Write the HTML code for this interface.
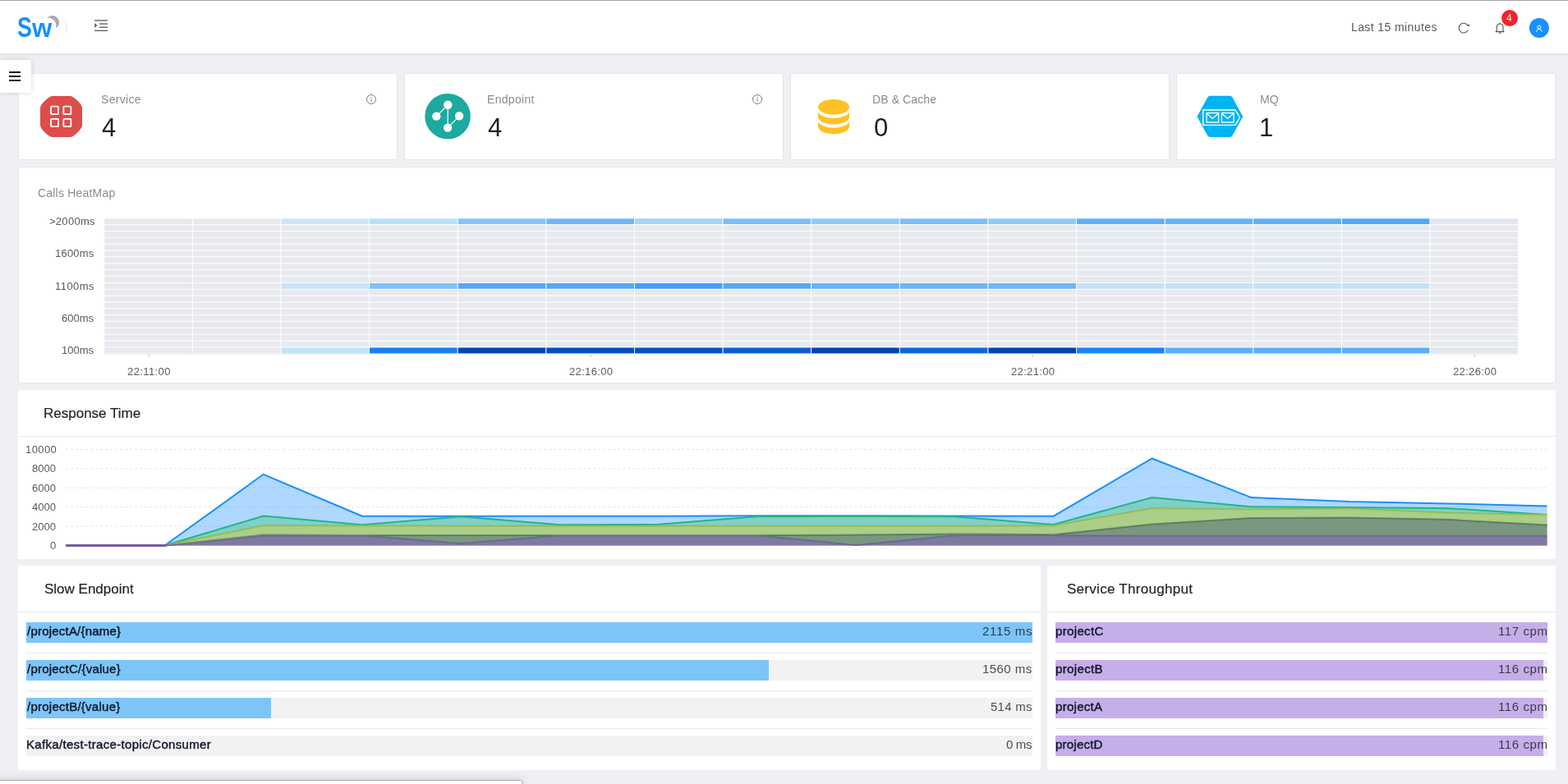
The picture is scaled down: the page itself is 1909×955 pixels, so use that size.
<!DOCTYPE html>
<html lang="en">
<head>
<meta charset="utf-8">
<title>SkyWalking</title>
<style>
html,body{margin:0;padding:0;}
body{width:1909px;height:955px;overflow:hidden;background:#eef0f4;font-family:"Liberation Sans", sans-serif;position:relative;}
.b{position:absolute;display:block;}
.t{position:absolute;white-space:nowrap;font-family:"Liberation Sans", sans-serif;will-change:transform;}
svg text{font-family:"Liberation Sans", sans-serif;}
</style>
</head>
<body>
<header class="topbar">
<div class="b " style="left:0px;top:0px;width:1909px;height:64.5px;background:#fff;box-shadow:0 1px 4px rgba(0,21,41,.10);"></div>
<div class="b " style="left:0px;top:0px;width:1909px;height:1px;background:#a3a1a4;"></div>
<svg class="b" style="left:0;top:0" width="160" height="65" viewBox="0 0 160 65">
<path d="M57.3,21.8 Q60,18.9 64,19 C69,19.4 72.3,23.5 72,28 C71.8,31 70.2,33.4 67.8,34.1 C69.4,30.2 67.6,26 64.6,23.7 C62.5,22.1 60,21.6 57.3,21.8 Z" fill="#a9a9a9"/>
<rect x="80" y="27" width="1" height="13" fill="#e3e3e3"/>
<g fill="#595959">
<rect x="115" y="24.3" width="16" height="1.3"/>
<rect x="121" y="28.4" width="10" height="1.3"/>
<rect x="121" y="32.6" width="10" height="1.3"/>
<rect x="115" y="36.7" width="16" height="1.3"/>
<path d="M115.2,28.2 L118.6,31 L115.2,33.8 Z"/>
</g>
</svg>
<div class="t" style="left:0;top:16.56px;font-size:33.6px;line-height:33.6px;font-weight:bold;color:#1890ff;width:90px;height:34px"><span style="position:absolute;left:21.2px;top:0;display:block;transform-origin:0 28.44px;transform:scale(0.8,1.055)">S</span><span style="position:absolute;left:39.4px;top:0;display:block;transform-origin:0 28.44px;transform:scale(0.93,0.945)">w</span></div>
<svg class="b" style="left:1760px;top:0" width="149" height="65" viewBox="1760 0 149 65">
<path d="M1786.96,30.91 A5.85,5.85 0 1 0 1787.39,36.48" fill="none" stroke="#505050" stroke-width="1.1"/>
<path d="M1788.9,29.3 L1788.6,32.2 L1785.9,31.2 Z" fill="#505050"/>
<g fill="none" stroke="#505050" stroke-width="1.1" stroke-linejoin="round">
<path d="M1822.2,38.4 L1822.2,33.2 A3.9,4.2 0 0 1 1830,33.2 L1830,38.4 M1820.6,38.6 L1831.4,38.6"/>
<path d="M1824.9,39.7 Q1826.1,41.4 1827.3,39.7"/>
<path d="M1826.1,29 L1826.1,27.8"/>
</g>
<circle cx="1838" cy="22" r="10" fill="#f5222d"/>
<circle cx="1873.9" cy="33.9" r="12" fill="#1890ff"/>
<g fill="none" stroke="#fff" stroke-width="0.95">
<circle cx="1873.9" cy="33.0" r="2.0"/>
<path d="M1870.4,38.8 Q1870.9,35.3 1873.9,35.2 Q1876.9,35.3 1877.4,38.8"/>
</g>
</svg>
<div class="t" style="left:1645px;top:26px;font-size:14px;line-height:14px;color:#595959;letter-spacing:0.400px;">Last 15 minutes</div>
<div class="t" style="left:1834px;top:16px;font-size:12px;line-height:12px;color:#fff;">4</div>
</header>
<main>
<section class="stat-cards">
<div class="b" style="left:22px;top:89px;width:462px;height:106px;background:#fff;border:1px solid #e5e5e6;border-radius:2px;box-sizing:border-box"></div>
<div class="b" style="left:492px;top:89px;width:462px;height:106px;background:#fff;border:1px solid #e5e5e6;border-radius:2px;box-sizing:border-box"></div>
<div class="b" style="left:962px;top:89px;width:462px;height:106px;background:#fff;border:1px solid #e5e5e6;border-radius:2px;box-sizing:border-box"></div>
<div class="b" style="left:1432px;top:89px;width:462px;height:106px;background:#fff;border:1px solid #e5e5e6;border-radius:2px;box-sizing:border-box"></div>
<svg class="b" style="left:40px;top:110px" width="70" height="65" viewBox="40 110 70 65">
<path d="M64,116.9 L85.5,116.9 C89.5,116.9 100,126.8 100,131.4 L100,152.4 C100,157 89.5,166.9 85.5,166.9 L64,166.9 C59.5,166.9 49,157 49,152.4 L49,131.4 C49,126.8 59.5,116.9 64,116.9 Z" fill="#dd4d4a"/>
<g fill="none" stroke="#fff" stroke-width="1.8">
<rect x="62.05" y="129.65" width="9.0" height="9.4" rx="1"/>
<rect x="77.35" y="129.65" width="9.0" height="9.4" rx="1"/>
<rect x="62.05" y="144.85" width="9.0" height="9.3" rx="1"/>
<rect x="77.35" y="144.85" width="9.0" height="9.3" rx="1"/>
</g>
</svg>
<svg class="b" style="left:510px;top:110px" width="70" height="65" viewBox="510 110 70 65">
<circle cx="545.1" cy="141.7" r="27.8" fill="#1da9a0"/>
<g stroke="#fff" stroke-width="1.2" fill="none">
<path d="M545.3,127.7 L531.3,141.6 M545.3,127.7 L545.1,155.6 M559.1,141.3 L545.1,155.6"/>
</g>
<g fill="#fff">
<circle cx="545.3" cy="127.7" r="5.2"/>
<circle cx="531.3" cy="141.6" r="5.2"/>
<circle cx="559.1" cy="141.3" r="5.2"/>
<circle cx="545.1" cy="155.6" r="5.2"/>
</g>
</svg>
<svg class="b" style="left:990px;top:110px" width="50" height="65" viewBox="990 110 50 65">
<path d="M996,146 L996,154 A19,9.3 0 0 0 1034,154 L1034,146 Z" fill="#ffc122"/>
<ellipse cx="1015" cy="145.5" rx="19.8" ry="10.2" fill="#fff"/>
<rect x="995" y="138" width="40" height="7.6" fill="#fff"/>
<path d="M996,134 L996,142.2 A19,9.2 0 0 0 1034,142.2 L1034,134 Z" fill="#ffc122"/>
<ellipse cx="1015" cy="133.8" rx="19.8" ry="10.2" fill="#fff"/>
<rect x="995" y="126" width="40" height="7.9" fill="#fff"/>
<ellipse cx="1015" cy="130.3" rx="19" ry="9.4" fill="#ffc122"/>
</svg>
<svg class="b" style="left:1450px;top:110px" width="70" height="65" viewBox="1450 110 70 65">
<path d="M1457.4,141.9 L1470.2,118.6 Q1471.3,116.8 1473.4,116.8 L1497.2,116.8 Q1499.3,116.8 1500.4,118.6 L1513.2,141.9 L1500.4,165.2 Q1499.3,166.9 1497.2,166.9 L1473.4,166.9 Q1471.3,166.9 1470.2,165.2 Z" fill="#00b4f0"/>
<g fill="none" stroke="#fff" stroke-width="1.35">
<path d="M1464.7,134 L1504,134 L1509.4,143.2 L1504,152.4 L1464.7,152.4 Z"/>
<rect x="1469" y="137.6" width="14.6" height="11.4"/>
<path d="M1469.6,138.4 L1476.3,144.4 L1483,138.4"/>
<rect x="1487.4" y="137.6" width="14.6" height="11.4"/>
<path d="M1488,138.4 L1494.7,144.4 L1501.4,138.4"/>
</g>
</svg>
<svg class="b" style="left:442.06px;top:111px" width="20" height="20" viewBox="442.06 111 20 20">
<circle cx="452.06" cy="121" r="5.5" fill="none" stroke="#7a7a7a" stroke-width="1"/>
<rect x="451.51" y="119.9" width="1.1" height="3.9" fill="#8a8a8a"/>
<rect x="451.46" y="118.1" width="1.2" height="1.1" fill="#8a8a8a"/>
</svg>
<svg class="b" style="left:912.06px;top:111px" width="20" height="20" viewBox="912.06 111 20 20">
<circle cx="922.06" cy="121" r="5.5" fill="none" stroke="#7a7a7a" stroke-width="1"/>
<rect x="921.51" y="119.9" width="1.1" height="3.9" fill="#8a8a8a"/>
<rect x="921.4599999999999" y="118.1" width="1.2" height="1.1" fill="#8a8a8a"/>
</svg>
<div class="t" style="left:123px;top:114px;font-size:14px;line-height:14px;color:#8c8c8c;letter-spacing:0.317px;">Service</div>
<div class="t" style="left:124px;top:140px;font-size:31px;line-height:31px;color:#1f1f1f;">4</div>
<div class="t" style="left:593px;top:114px;font-size:14px;line-height:14px;color:#8c8c8c;letter-spacing:0.314px;">Endpoint</div>
<div class="t" style="left:594px;top:140px;font-size:31px;line-height:31px;color:#1f1f1f;">4</div>
<div class="t" style="left:1062px;top:114px;font-size:14px;line-height:14px;color:#8c8c8c;letter-spacing:0.111px;">DB &amp; Cache</div>
<div class="t" style="left:1064px;top:140px;font-size:31px;line-height:31px;color:#1f1f1f;">0</div>
<div class="t" style="left:1534px;top:114px;font-size:14px;line-height:14px;color:#8c8c8c;">MQ</div>
<div class="t" style="left:1533px;top:140px;font-size:31px;line-height:31px;color:#1f1f1f;">1</div>
</section>
<section class="heatmap">
<div class="b" style="left:22px;top:203px;width:1872px;height:264px;background:#fff;border:1px solid #e5e5e6;border-radius:2px;box-sizing:border-box"></div>
<svg class="b" style="left:0;top:255px" width="1909" height="215" viewBox="0 255 1909 215">
<g stroke="#fff" stroke-width="0.85">
<rect x="126.80" y="265.90" width="107.61" height="7.86" fill="#e8e9ee"/>
<rect x="234.41" y="265.90" width="107.61" height="7.86" fill="#e8e9ee"/>
<rect x="342.02" y="265.90" width="107.61" height="7.86" fill="#cce5f6"/>
<rect x="449.64" y="265.90" width="107.61" height="7.86" fill="#b5e0fb"/>
<rect x="557.25" y="265.90" width="107.61" height="7.86" fill="#82c5fc"/>
<rect x="664.86" y="265.90" width="107.61" height="7.86" fill="#6db8fb"/>
<rect x="772.47" y="265.90" width="107.61" height="7.86" fill="#a0d6fb"/>
<rect x="880.09" y="265.90" width="107.61" height="7.86" fill="#78bffb"/>
<rect x="987.70" y="265.90" width="107.61" height="7.86" fill="#8ccafb"/>
<rect x="1095.31" y="265.90" width="107.61" height="7.86" fill="#78bffb"/>
<rect x="1202.92" y="265.90" width="107.61" height="7.86" fill="#8ccafb"/>
<rect x="1310.54" y="265.90" width="107.61" height="7.86" fill="#5cb0fb"/>
<rect x="1418.15" y="265.90" width="107.61" height="7.86" fill="#62b4fb"/>
<rect x="1525.76" y="265.90" width="107.61" height="7.86" fill="#5bb0fb"/>
<rect x="1633.38" y="265.90" width="107.61" height="7.86" fill="#4da8fb"/>
<rect x="1740.99" y="265.90" width="107.61" height="7.86" fill="#e2e7ef"/>
<rect x="126.80" y="273.76" width="107.61" height="7.86" fill="#e8e9ee"/>
<rect x="234.41" y="273.76" width="107.61" height="7.86" fill="#e8e9ee"/>
<rect x="342.02" y="273.76" width="107.61" height="7.86" fill="#e8e9ee"/>
<rect x="449.64" y="273.76" width="107.61" height="7.86" fill="#e8e9ee"/>
<rect x="557.25" y="273.76" width="107.61" height="7.86" fill="#e8e9ee"/>
<rect x="664.86" y="273.76" width="107.61" height="7.86" fill="#e8e9ee"/>
<rect x="772.47" y="273.76" width="107.61" height="7.86" fill="#e8e9ee"/>
<rect x="880.09" y="273.76" width="107.61" height="7.86" fill="#e8e9ee"/>
<rect x="987.70" y="273.76" width="107.61" height="7.86" fill="#e8e9ee"/>
<rect x="1095.31" y="273.76" width="107.61" height="7.86" fill="#e8e9ee"/>
<rect x="1202.92" y="273.76" width="107.61" height="7.86" fill="#e8e9ee"/>
<rect x="1310.54" y="273.76" width="107.61" height="7.86" fill="#e5e9f0"/>
<rect x="1418.15" y="273.76" width="107.61" height="7.86" fill="#e5e9f0"/>
<rect x="1525.76" y="273.76" width="107.61" height="7.86" fill="#e5e9f0"/>
<rect x="1633.38" y="273.76" width="107.61" height="7.86" fill="#e5e9f0"/>
<rect x="1740.99" y="273.76" width="107.61" height="7.86" fill="#e8e9ee"/>
<rect x="126.80" y="281.61" width="107.61" height="7.86" fill="#e8e9ee"/>
<rect x="234.41" y="281.61" width="107.61" height="7.86" fill="#e8e9ee"/>
<rect x="342.02" y="281.61" width="107.61" height="7.86" fill="#e8e9ee"/>
<rect x="449.64" y="281.61" width="107.61" height="7.86" fill="#e8e9ee"/>
<rect x="557.25" y="281.61" width="107.61" height="7.86" fill="#e8e9ee"/>
<rect x="664.86" y="281.61" width="107.61" height="7.86" fill="#e8e9ee"/>
<rect x="772.47" y="281.61" width="107.61" height="7.86" fill="#e8e9ee"/>
<rect x="880.09" y="281.61" width="107.61" height="7.86" fill="#e8e9ee"/>
<rect x="987.70" y="281.61" width="107.61" height="7.86" fill="#e8e9ee"/>
<rect x="1095.31" y="281.61" width="107.61" height="7.86" fill="#e8e9ee"/>
<rect x="1202.92" y="281.61" width="107.61" height="7.86" fill="#e8e9ee"/>
<rect x="1310.54" y="281.61" width="107.61" height="7.86" fill="#e5e9f0"/>
<rect x="1418.15" y="281.61" width="107.61" height="7.86" fill="#e5e9f0"/>
<rect x="1525.76" y="281.61" width="107.61" height="7.86" fill="#e5e9f0"/>
<rect x="1633.38" y="281.61" width="107.61" height="7.86" fill="#e5e9f0"/>
<rect x="1740.99" y="281.61" width="107.61" height="7.86" fill="#e8e9ee"/>
<rect x="126.80" y="289.47" width="107.61" height="7.86" fill="#e8e9ee"/>
<rect x="234.41" y="289.47" width="107.61" height="7.86" fill="#e8e9ee"/>
<rect x="342.02" y="289.47" width="107.61" height="7.86" fill="#e8e9ee"/>
<rect x="449.64" y="289.47" width="107.61" height="7.86" fill="#e8e9ee"/>
<rect x="557.25" y="289.47" width="107.61" height="7.86" fill="#e8e9ee"/>
<rect x="664.86" y="289.47" width="107.61" height="7.86" fill="#e8e9ee"/>
<rect x="772.47" y="289.47" width="107.61" height="7.86" fill="#e8e9ee"/>
<rect x="880.09" y="289.47" width="107.61" height="7.86" fill="#e8e9ee"/>
<rect x="987.70" y="289.47" width="107.61" height="7.86" fill="#e8e9ee"/>
<rect x="1095.31" y="289.47" width="107.61" height="7.86" fill="#e8e9ee"/>
<rect x="1202.92" y="289.47" width="107.61" height="7.86" fill="#e8e9ee"/>
<rect x="1310.54" y="289.47" width="107.61" height="7.86" fill="#e5e9f0"/>
<rect x="1418.15" y="289.47" width="107.61" height="7.86" fill="#e5e9f0"/>
<rect x="1525.76" y="289.47" width="107.61" height="7.86" fill="#e5e9f0"/>
<rect x="1633.38" y="289.47" width="107.61" height="7.86" fill="#e5e9f0"/>
<rect x="1740.99" y="289.47" width="107.61" height="7.86" fill="#e8e9ee"/>
<rect x="126.80" y="297.33" width="107.61" height="7.86" fill="#e8e9ee"/>
<rect x="234.41" y="297.33" width="107.61" height="7.86" fill="#e8e9ee"/>
<rect x="342.02" y="297.33" width="107.61" height="7.86" fill="#e8e9ee"/>
<rect x="449.64" y="297.33" width="107.61" height="7.86" fill="#e8e9ee"/>
<rect x="557.25" y="297.33" width="107.61" height="7.86" fill="#e8e9ee"/>
<rect x="664.86" y="297.33" width="107.61" height="7.86" fill="#e8e9ee"/>
<rect x="772.47" y="297.33" width="107.61" height="7.86" fill="#e8e9ee"/>
<rect x="880.09" y="297.33" width="107.61" height="7.86" fill="#e8e9ee"/>
<rect x="987.70" y="297.33" width="107.61" height="7.86" fill="#e8e9ee"/>
<rect x="1095.31" y="297.33" width="107.61" height="7.86" fill="#e8e9ee"/>
<rect x="1202.92" y="297.33" width="107.61" height="7.86" fill="#e8e9ee"/>
<rect x="1310.54" y="297.33" width="107.61" height="7.86" fill="#e5e9f0"/>
<rect x="1418.15" y="297.33" width="107.61" height="7.86" fill="#e5e9f0"/>
<rect x="1525.76" y="297.33" width="107.61" height="7.86" fill="#e5e9f0"/>
<rect x="1633.38" y="297.33" width="107.61" height="7.86" fill="#e5e9f0"/>
<rect x="1740.99" y="297.33" width="107.61" height="7.86" fill="#e8e9ee"/>
<rect x="126.80" y="305.19" width="107.61" height="7.86" fill="#e8e9ee"/>
<rect x="234.41" y="305.19" width="107.61" height="7.86" fill="#e8e9ee"/>
<rect x="342.02" y="305.19" width="107.61" height="7.86" fill="#e8e9ee"/>
<rect x="449.64" y="305.19" width="107.61" height="7.86" fill="#e8e9ee"/>
<rect x="557.25" y="305.19" width="107.61" height="7.86" fill="#e8e9ee"/>
<rect x="664.86" y="305.19" width="107.61" height="7.86" fill="#e8e9ee"/>
<rect x="772.47" y="305.19" width="107.61" height="7.86" fill="#e8e9ee"/>
<rect x="880.09" y="305.19" width="107.61" height="7.86" fill="#e8e9ee"/>
<rect x="987.70" y="305.19" width="107.61" height="7.86" fill="#e8e9ee"/>
<rect x="1095.31" y="305.19" width="107.61" height="7.86" fill="#e8e9ee"/>
<rect x="1202.92" y="305.19" width="107.61" height="7.86" fill="#e8e9ee"/>
<rect x="1310.54" y="305.19" width="107.61" height="7.86" fill="#e5e9f0"/>
<rect x="1418.15" y="305.19" width="107.61" height="7.86" fill="#e5e9f0"/>
<rect x="1525.76" y="305.19" width="107.61" height="7.86" fill="#e5e9f0"/>
<rect x="1633.38" y="305.19" width="107.61" height="7.86" fill="#e5e9f0"/>
<rect x="1740.99" y="305.19" width="107.61" height="7.86" fill="#e8e9ee"/>
<rect x="126.80" y="313.04" width="107.61" height="7.86" fill="#e8e9ee"/>
<rect x="234.41" y="313.04" width="107.61" height="7.86" fill="#e8e9ee"/>
<rect x="342.02" y="313.04" width="107.61" height="7.86" fill="#e8e9ee"/>
<rect x="449.64" y="313.04" width="107.61" height="7.86" fill="#e8e9ee"/>
<rect x="557.25" y="313.04" width="107.61" height="7.86" fill="#e8e9ee"/>
<rect x="664.86" y="313.04" width="107.61" height="7.86" fill="#e8e9ee"/>
<rect x="772.47" y="313.04" width="107.61" height="7.86" fill="#e8e9ee"/>
<rect x="880.09" y="313.04" width="107.61" height="7.86" fill="#e8e9ee"/>
<rect x="987.70" y="313.04" width="107.61" height="7.86" fill="#e8e9ee"/>
<rect x="1095.31" y="313.04" width="107.61" height="7.86" fill="#e8e9ee"/>
<rect x="1202.92" y="313.04" width="107.61" height="7.86" fill="#e8e9ee"/>
<rect x="1310.54" y="313.04" width="107.61" height="7.86" fill="#e5e9f0"/>
<rect x="1418.15" y="313.04" width="107.61" height="7.86" fill="#e5e9f0"/>
<rect x="1525.76" y="313.04" width="107.61" height="7.86" fill="#dfe8f1"/>
<rect x="1633.38" y="313.04" width="107.61" height="7.86" fill="#e5e9f0"/>
<rect x="1740.99" y="313.04" width="107.61" height="7.86" fill="#e8e9ee"/>
<rect x="126.80" y="320.90" width="107.61" height="7.86" fill="#e8e9ee"/>
<rect x="234.41" y="320.90" width="107.61" height="7.86" fill="#e8e9ee"/>
<rect x="342.02" y="320.90" width="107.61" height="7.86" fill="#e8e9ee"/>
<rect x="449.64" y="320.90" width="107.61" height="7.86" fill="#e8e9ee"/>
<rect x="557.25" y="320.90" width="107.61" height="7.86" fill="#e8e9ee"/>
<rect x="664.86" y="320.90" width="107.61" height="7.86" fill="#e8e9ee"/>
<rect x="772.47" y="320.90" width="107.61" height="7.86" fill="#e8e9ee"/>
<rect x="880.09" y="320.90" width="107.61" height="7.86" fill="#e8e9ee"/>
<rect x="987.70" y="320.90" width="107.61" height="7.86" fill="#e8e9ee"/>
<rect x="1095.31" y="320.90" width="107.61" height="7.86" fill="#e8e9ee"/>
<rect x="1202.92" y="320.90" width="107.61" height="7.86" fill="#e8e9ee"/>
<rect x="1310.54" y="320.90" width="107.61" height="7.86" fill="#e5e9f0"/>
<rect x="1418.15" y="320.90" width="107.61" height="7.86" fill="#e5e9f0"/>
<rect x="1525.76" y="320.90" width="107.61" height="7.86" fill="#e5e9f0"/>
<rect x="1633.38" y="320.90" width="107.61" height="7.86" fill="#e5e9f0"/>
<rect x="1740.99" y="320.90" width="107.61" height="7.86" fill="#e8e9ee"/>
<rect x="126.80" y="328.76" width="107.61" height="7.86" fill="#e8e9ee"/>
<rect x="234.41" y="328.76" width="107.61" height="7.86" fill="#e8e9ee"/>
<rect x="342.02" y="328.76" width="107.61" height="7.86" fill="#e8e9ee"/>
<rect x="449.64" y="328.76" width="107.61" height="7.86" fill="#e8e9ee"/>
<rect x="557.25" y="328.76" width="107.61" height="7.86" fill="#e8e9ee"/>
<rect x="664.86" y="328.76" width="107.61" height="7.86" fill="#e8e9ee"/>
<rect x="772.47" y="328.76" width="107.61" height="7.86" fill="#e8e9ee"/>
<rect x="880.09" y="328.76" width="107.61" height="7.86" fill="#e8e9ee"/>
<rect x="987.70" y="328.76" width="107.61" height="7.86" fill="#e8e9ee"/>
<rect x="1095.31" y="328.76" width="107.61" height="7.86" fill="#e8e9ee"/>
<rect x="1202.92" y="328.76" width="107.61" height="7.86" fill="#e8e9ee"/>
<rect x="1310.54" y="328.76" width="107.61" height="7.86" fill="#e5e9f0"/>
<rect x="1418.15" y="328.76" width="107.61" height="7.86" fill="#e5e9f0"/>
<rect x="1525.76" y="328.76" width="107.61" height="7.86" fill="#e5e9f0"/>
<rect x="1633.38" y="328.76" width="107.61" height="7.86" fill="#e5e9f0"/>
<rect x="1740.99" y="328.76" width="107.61" height="7.86" fill="#e8e9ee"/>
<rect x="126.80" y="336.61" width="107.61" height="7.86" fill="#e8e9ee"/>
<rect x="234.41" y="336.61" width="107.61" height="7.86" fill="#e8e9ee"/>
<rect x="342.02" y="336.61" width="107.61" height="7.86" fill="#e3eaf2"/>
<rect x="449.64" y="336.61" width="107.61" height="7.86" fill="#e8e9ee"/>
<rect x="557.25" y="336.61" width="107.61" height="7.86" fill="#e8e9ee"/>
<rect x="664.86" y="336.61" width="107.61" height="7.86" fill="#e8e9ee"/>
<rect x="772.47" y="336.61" width="107.61" height="7.86" fill="#e3eaf2"/>
<rect x="880.09" y="336.61" width="107.61" height="7.86" fill="#e8e9ee"/>
<rect x="987.70" y="336.61" width="107.61" height="7.86" fill="#e8e9ee"/>
<rect x="1095.31" y="336.61" width="107.61" height="7.86" fill="#e8e9ee"/>
<rect x="1202.92" y="336.61" width="107.61" height="7.86" fill="#e8e9ee"/>
<rect x="1310.54" y="336.61" width="107.61" height="7.86" fill="#e5e9f0"/>
<rect x="1418.15" y="336.61" width="107.61" height="7.86" fill="#e5e9f0"/>
<rect x="1525.76" y="336.61" width="107.61" height="7.86" fill="#e5e9f0"/>
<rect x="1633.38" y="336.61" width="107.61" height="7.86" fill="#e5e9f0"/>
<rect x="1740.99" y="336.61" width="107.61" height="7.86" fill="#e8e9ee"/>
<rect x="126.80" y="344.47" width="107.61" height="7.86" fill="#e8e9ee"/>
<rect x="234.41" y="344.47" width="107.61" height="7.86" fill="#e8e9ee"/>
<rect x="342.02" y="344.47" width="107.61" height="7.86" fill="#c5e4f7"/>
<rect x="449.64" y="344.47" width="107.61" height="7.86" fill="#7cc2fb"/>
<rect x="557.25" y="344.47" width="107.61" height="7.86" fill="#50a9fb"/>
<rect x="664.86" y="344.47" width="107.61" height="7.86" fill="#50a9fb"/>
<rect x="772.47" y="344.47" width="107.61" height="7.86" fill="#3fa0fb"/>
<rect x="880.09" y="344.47" width="107.61" height="7.86" fill="#52a9fa"/>
<rect x="987.70" y="344.47" width="107.61" height="7.86" fill="#63b4fb"/>
<rect x="1095.31" y="344.47" width="107.61" height="7.86" fill="#68b7fb"/>
<rect x="1202.92" y="344.47" width="107.61" height="7.86" fill="#6ab8fb"/>
<rect x="1310.54" y="344.47" width="107.61" height="7.86" fill="#c0e3f8"/>
<rect x="1418.15" y="344.47" width="107.61" height="7.86" fill="#c0e3f8"/>
<rect x="1525.76" y="344.47" width="107.61" height="7.86" fill="#c0e3f8"/>
<rect x="1633.38" y="344.47" width="107.61" height="7.86" fill="#c0e3f8"/>
<rect x="1740.99" y="344.47" width="107.61" height="7.86" fill="#e8e9ee"/>
<rect x="126.80" y="352.33" width="107.61" height="7.86" fill="#e8e9ee"/>
<rect x="234.41" y="352.33" width="107.61" height="7.86" fill="#e8e9ee"/>
<rect x="342.02" y="352.33" width="107.61" height="7.86" fill="#e8e9ee"/>
<rect x="449.64" y="352.33" width="107.61" height="7.86" fill="#e8e9ee"/>
<rect x="557.25" y="352.33" width="107.61" height="7.86" fill="#e8e9ee"/>
<rect x="664.86" y="352.33" width="107.61" height="7.86" fill="#e8e9ee"/>
<rect x="772.47" y="352.33" width="107.61" height="7.86" fill="#e8e9ee"/>
<rect x="880.09" y="352.33" width="107.61" height="7.86" fill="#e8e9ee"/>
<rect x="987.70" y="352.33" width="107.61" height="7.86" fill="#e8e9ee"/>
<rect x="1095.31" y="352.33" width="107.61" height="7.86" fill="#e8e9ee"/>
<rect x="1202.92" y="352.33" width="107.61" height="7.86" fill="#e8e9ee"/>
<rect x="1310.54" y="352.33" width="107.61" height="7.86" fill="#e8e9ee"/>
<rect x="1418.15" y="352.33" width="107.61" height="7.86" fill="#e8e9ee"/>
<rect x="1525.76" y="352.33" width="107.61" height="7.86" fill="#e8e9ee"/>
<rect x="1633.38" y="352.33" width="107.61" height="7.86" fill="#e8e9ee"/>
<rect x="1740.99" y="352.33" width="107.61" height="7.86" fill="#e8e9ee"/>
<rect x="126.80" y="360.19" width="107.61" height="7.86" fill="#e8e9ee"/>
<rect x="234.41" y="360.19" width="107.61" height="7.86" fill="#e8e9ee"/>
<rect x="342.02" y="360.19" width="107.61" height="7.86" fill="#e8e9ee"/>
<rect x="449.64" y="360.19" width="107.61" height="7.86" fill="#e8e9ee"/>
<rect x="557.25" y="360.19" width="107.61" height="7.86" fill="#e8e9ee"/>
<rect x="664.86" y="360.19" width="107.61" height="7.86" fill="#e8e9ee"/>
<rect x="772.47" y="360.19" width="107.61" height="7.86" fill="#e8e9ee"/>
<rect x="880.09" y="360.19" width="107.61" height="7.86" fill="#e8e9ee"/>
<rect x="987.70" y="360.19" width="107.61" height="7.86" fill="#e8e9ee"/>
<rect x="1095.31" y="360.19" width="107.61" height="7.86" fill="#e8e9ee"/>
<rect x="1202.92" y="360.19" width="107.61" height="7.86" fill="#e8e9ee"/>
<rect x="1310.54" y="360.19" width="107.61" height="7.86" fill="#e8e9ee"/>
<rect x="1418.15" y="360.19" width="107.61" height="7.86" fill="#e8e9ee"/>
<rect x="1525.76" y="360.19" width="107.61" height="7.86" fill="#e8e9ee"/>
<rect x="1633.38" y="360.19" width="107.61" height="7.86" fill="#e8e9ee"/>
<rect x="1740.99" y="360.19" width="107.61" height="7.86" fill="#e8e9ee"/>
<rect x="126.80" y="368.04" width="107.61" height="7.86" fill="#e8e9ee"/>
<rect x="234.41" y="368.04" width="107.61" height="7.86" fill="#e8e9ee"/>
<rect x="342.02" y="368.04" width="107.61" height="7.86" fill="#e8e9ee"/>
<rect x="449.64" y="368.04" width="107.61" height="7.86" fill="#e8e9ee"/>
<rect x="557.25" y="368.04" width="107.61" height="7.86" fill="#e8e9ee"/>
<rect x="664.86" y="368.04" width="107.61" height="7.86" fill="#e8e9ee"/>
<rect x="772.47" y="368.04" width="107.61" height="7.86" fill="#e8e9ee"/>
<rect x="880.09" y="368.04" width="107.61" height="7.86" fill="#e8e9ee"/>
<rect x="987.70" y="368.04" width="107.61" height="7.86" fill="#e8e9ee"/>
<rect x="1095.31" y="368.04" width="107.61" height="7.86" fill="#e8e9ee"/>
<rect x="1202.92" y="368.04" width="107.61" height="7.86" fill="#e8e9ee"/>
<rect x="1310.54" y="368.04" width="107.61" height="7.86" fill="#e8e9ee"/>
<rect x="1418.15" y="368.04" width="107.61" height="7.86" fill="#e8e9ee"/>
<rect x="1525.76" y="368.04" width="107.61" height="7.86" fill="#e8e9ee"/>
<rect x="1633.38" y="368.04" width="107.61" height="7.86" fill="#e8e9ee"/>
<rect x="1740.99" y="368.04" width="107.61" height="7.86" fill="#e8e9ee"/>
<rect x="126.80" y="375.90" width="107.61" height="7.86" fill="#e8e9ee"/>
<rect x="234.41" y="375.90" width="107.61" height="7.86" fill="#e8e9ee"/>
<rect x="342.02" y="375.90" width="107.61" height="7.86" fill="#e8e9ee"/>
<rect x="449.64" y="375.90" width="107.61" height="7.86" fill="#e8e9ee"/>
<rect x="557.25" y="375.90" width="107.61" height="7.86" fill="#e8e9ee"/>
<rect x="664.86" y="375.90" width="107.61" height="7.86" fill="#e8e9ee"/>
<rect x="772.47" y="375.90" width="107.61" height="7.86" fill="#e8e9ee"/>
<rect x="880.09" y="375.90" width="107.61" height="7.86" fill="#e8e9ee"/>
<rect x="987.70" y="375.90" width="107.61" height="7.86" fill="#e8e9ee"/>
<rect x="1095.31" y="375.90" width="107.61" height="7.86" fill="#e8e9ee"/>
<rect x="1202.92" y="375.90" width="107.61" height="7.86" fill="#e8e9ee"/>
<rect x="1310.54" y="375.90" width="107.61" height="7.86" fill="#e8e9ee"/>
<rect x="1418.15" y="375.90" width="107.61" height="7.86" fill="#e8e9ee"/>
<rect x="1525.76" y="375.90" width="107.61" height="7.86" fill="#e8e9ee"/>
<rect x="1633.38" y="375.90" width="107.61" height="7.86" fill="#e8e9ee"/>
<rect x="1740.99" y="375.90" width="107.61" height="7.86" fill="#e8e9ee"/>
<rect x="126.80" y="383.76" width="107.61" height="7.86" fill="#e8e9ee"/>
<rect x="234.41" y="383.76" width="107.61" height="7.86" fill="#e8e9ee"/>
<rect x="342.02" y="383.76" width="107.61" height="7.86" fill="#e8e9ee"/>
<rect x="449.64" y="383.76" width="107.61" height="7.86" fill="#e8e9ee"/>
<rect x="557.25" y="383.76" width="107.61" height="7.86" fill="#e8e9ee"/>
<rect x="664.86" y="383.76" width="107.61" height="7.86" fill="#e8e9ee"/>
<rect x="772.47" y="383.76" width="107.61" height="7.86" fill="#e8e9ee"/>
<rect x="880.09" y="383.76" width="107.61" height="7.86" fill="#e8e9ee"/>
<rect x="987.70" y="383.76" width="107.61" height="7.86" fill="#e8e9ee"/>
<rect x="1095.31" y="383.76" width="107.61" height="7.86" fill="#e8e9ee"/>
<rect x="1202.92" y="383.76" width="107.61" height="7.86" fill="#e8e9ee"/>
<rect x="1310.54" y="383.76" width="107.61" height="7.86" fill="#e8e9ee"/>
<rect x="1418.15" y="383.76" width="107.61" height="7.86" fill="#e8e9ee"/>
<rect x="1525.76" y="383.76" width="107.61" height="7.86" fill="#e8e9ee"/>
<rect x="1633.38" y="383.76" width="107.61" height="7.86" fill="#e8e9ee"/>
<rect x="1740.99" y="383.76" width="107.61" height="7.86" fill="#e8e9ee"/>
<rect x="126.80" y="391.61" width="107.61" height="7.86" fill="#e8e9ee"/>
<rect x="234.41" y="391.61" width="107.61" height="7.86" fill="#e8e9ee"/>
<rect x="342.02" y="391.61" width="107.61" height="7.86" fill="#e8e9ee"/>
<rect x="449.64" y="391.61" width="107.61" height="7.86" fill="#e8e9ee"/>
<rect x="557.25" y="391.61" width="107.61" height="7.86" fill="#e8e9ee"/>
<rect x="664.86" y="391.61" width="107.61" height="7.86" fill="#e8e9ee"/>
<rect x="772.47" y="391.61" width="107.61" height="7.86" fill="#e8e9ee"/>
<rect x="880.09" y="391.61" width="107.61" height="7.86" fill="#e8e9ee"/>
<rect x="987.70" y="391.61" width="107.61" height="7.86" fill="#e8e9ee"/>
<rect x="1095.31" y="391.61" width="107.61" height="7.86" fill="#e8e9ee"/>
<rect x="1202.92" y="391.61" width="107.61" height="7.86" fill="#e8e9ee"/>
<rect x="1310.54" y="391.61" width="107.61" height="7.86" fill="#e8e9ee"/>
<rect x="1418.15" y="391.61" width="107.61" height="7.86" fill="#e8e9ee"/>
<rect x="1525.76" y="391.61" width="107.61" height="7.86" fill="#e8e9ee"/>
<rect x="1633.38" y="391.61" width="107.61" height="7.86" fill="#e8e9ee"/>
<rect x="1740.99" y="391.61" width="107.61" height="7.86" fill="#e8e9ee"/>
<rect x="126.80" y="399.47" width="107.61" height="7.86" fill="#e8e9ee"/>
<rect x="234.41" y="399.47" width="107.61" height="7.86" fill="#e8e9ee"/>
<rect x="342.02" y="399.47" width="107.61" height="7.86" fill="#e8e9ee"/>
<rect x="449.64" y="399.47" width="107.61" height="7.86" fill="#e8e9ee"/>
<rect x="557.25" y="399.47" width="107.61" height="7.86" fill="#e8e9ee"/>
<rect x="664.86" y="399.47" width="107.61" height="7.86" fill="#e8e9ee"/>
<rect x="772.47" y="399.47" width="107.61" height="7.86" fill="#e8e9ee"/>
<rect x="880.09" y="399.47" width="107.61" height="7.86" fill="#e8e9ee"/>
<rect x="987.70" y="399.47" width="107.61" height="7.86" fill="#e8e9ee"/>
<rect x="1095.31" y="399.47" width="107.61" height="7.86" fill="#e8e9ee"/>
<rect x="1202.92" y="399.47" width="107.61" height="7.86" fill="#e8e9ee"/>
<rect x="1310.54" y="399.47" width="107.61" height="7.86" fill="#e8e9ee"/>
<rect x="1418.15" y="399.47" width="107.61" height="7.86" fill="#e8e9ee"/>
<rect x="1525.76" y="399.47" width="107.61" height="7.86" fill="#e8e9ee"/>
<rect x="1633.38" y="399.47" width="107.61" height="7.86" fill="#e8e9ee"/>
<rect x="1740.99" y="399.47" width="107.61" height="7.86" fill="#e8e9ee"/>
<rect x="126.80" y="407.33" width="107.61" height="7.86" fill="#e8e9ee"/>
<rect x="234.41" y="407.33" width="107.61" height="7.86" fill="#e8e9ee"/>
<rect x="342.02" y="407.33" width="107.61" height="7.86" fill="#e8e9ee"/>
<rect x="449.64" y="407.33" width="107.61" height="7.86" fill="#e8e9ee"/>
<rect x="557.25" y="407.33" width="107.61" height="7.86" fill="#e8e9ee"/>
<rect x="664.86" y="407.33" width="107.61" height="7.86" fill="#e8e9ee"/>
<rect x="772.47" y="407.33" width="107.61" height="7.86" fill="#e8e9ee"/>
<rect x="880.09" y="407.33" width="107.61" height="7.86" fill="#e8e9ee"/>
<rect x="987.70" y="407.33" width="107.61" height="7.86" fill="#e8e9ee"/>
<rect x="1095.31" y="407.33" width="107.61" height="7.86" fill="#e8e9ee"/>
<rect x="1202.92" y="407.33" width="107.61" height="7.86" fill="#e8e9ee"/>
<rect x="1310.54" y="407.33" width="107.61" height="7.86" fill="#e8e9ee"/>
<rect x="1418.15" y="407.33" width="107.61" height="7.86" fill="#e8e9ee"/>
<rect x="1525.76" y="407.33" width="107.61" height="7.86" fill="#e8e9ee"/>
<rect x="1633.38" y="407.33" width="107.61" height="7.86" fill="#e8e9ee"/>
<rect x="1740.99" y="407.33" width="107.61" height="7.86" fill="#e8e9ee"/>
<rect x="126.80" y="415.19" width="107.61" height="7.86" fill="#e8e9ee"/>
<rect x="234.41" y="415.19" width="107.61" height="7.86" fill="#e8e9ee"/>
<rect x="342.02" y="415.19" width="107.61" height="7.86" fill="#e6ebf0"/>
<rect x="449.64" y="415.19" width="107.61" height="7.86" fill="#e6ebf0"/>
<rect x="557.25" y="415.19" width="107.61" height="7.86" fill="#e6ebf0"/>
<rect x="664.86" y="415.19" width="107.61" height="7.86" fill="#e6ebf0"/>
<rect x="772.47" y="415.19" width="107.61" height="7.86" fill="#e6ebf0"/>
<rect x="880.09" y="415.19" width="107.61" height="7.86" fill="#e6ebf0"/>
<rect x="987.70" y="415.19" width="107.61" height="7.86" fill="#e6ebf0"/>
<rect x="1095.31" y="415.19" width="107.61" height="7.86" fill="#e6ebf0"/>
<rect x="1202.92" y="415.19" width="107.61" height="7.86" fill="#e6ebf0"/>
<rect x="1310.54" y="415.19" width="107.61" height="7.86" fill="#e8e9ee"/>
<rect x="1418.15" y="415.19" width="107.61" height="7.86" fill="#e8e9ee"/>
<rect x="1525.76" y="415.19" width="107.61" height="7.86" fill="#e8e9ee"/>
<rect x="1633.38" y="415.19" width="107.61" height="7.86" fill="#e8e9ee"/>
<rect x="1740.99" y="415.19" width="107.61" height="7.86" fill="#e8e9ee"/>
<rect x="126.80" y="423.04" width="107.61" height="7.86" fill="#e8e9ee"/>
<rect x="234.41" y="423.04" width="107.61" height="7.86" fill="#e8e9ee"/>
<rect x="342.02" y="423.04" width="107.61" height="7.86" fill="#bfe3f8"/>
<rect x="449.64" y="423.04" width="107.61" height="7.86" fill="#177ff0"/>
<rect x="557.25" y="423.04" width="107.61" height="7.86" fill="#0046b0"/>
<rect x="664.86" y="423.04" width="107.61" height="7.86" fill="#0350be"/>
<rect x="772.47" y="423.04" width="107.61" height="7.86" fill="#0452c2"/>
<rect x="880.09" y="423.04" width="107.61" height="7.86" fill="#0b5ed0"/>
<rect x="987.70" y="423.04" width="107.61" height="7.86" fill="#0044ad"/>
<rect x="1095.31" y="423.04" width="107.61" height="7.86" fill="#0b66db"/>
<rect x="1202.92" y="423.04" width="107.61" height="7.86" fill="#0044ad"/>
<rect x="1310.54" y="423.04" width="107.61" height="7.86" fill="#1785f7"/>
<rect x="1418.15" y="423.04" width="107.61" height="7.86" fill="#5aaffb"/>
<rect x="1525.76" y="423.04" width="107.61" height="7.86" fill="#5aaffb"/>
<rect x="1633.38" y="423.04" width="107.61" height="7.86" fill="#5aaffb"/>
<rect x="1740.99" y="423.04" width="107.61" height="7.86" fill="#e2e7ef"/>
</g>
<rect x="126.8" y="431" width="1721.8" height="1" fill="#ededed"/>
<rect x="180.6" y="432" width="1" height="3" fill="#bdbdbd"/>
<rect x="718.6" y="432" width="1" height="3" fill="#bdbdbd"/>
<rect x="1256.6000000000001" y="432" width="1" height="3" fill="#bdbdbd"/>
<rect x="1794.6000000000001" y="432" width="1" height="3" fill="#bdbdbd"/>
</svg>
<div class="t" style="left:46px;top:228px;font-size:14px;line-height:14px;color:#8c8c8c;letter-spacing:0.200px;">Calls HeatMap</div>
<div class="t" style="left:60px;top:263px;font-size:13px;line-height:13px;color:#595959;letter-spacing:0.275px;">&gt;2000ms</div>
<div class="t" style="left:67px;top:302px;font-size:13px;line-height:13px;color:#595959;letter-spacing:0.220px;">1600ms</div>
<div class="t" style="left:67px;top:342px;font-size:13px;line-height:13px;color:#595959;letter-spacing:0.460px;">1100ms</div>
<div class="t" style="left:75px;top:381px;font-size:13px;line-height:13px;color:#595959;">600ms</div>
<div class="t" style="left:75px;top:420px;font-size:13px;line-height:13px;color:#595959;">100ms</div>
<div class="t" style="left:155px;top:446px;font-size:13px;line-height:13px;color:#595959;letter-spacing:0.400px;">22:11:00</div>
<div class="t" style="left:693px;top:446px;font-size:13px;line-height:13px;color:#595959;letter-spacing:0.343px;">22:16:00</div>
<div class="t" style="left:1231px;top:446px;font-size:13px;line-height:13px;color:#595959;letter-spacing:0.343px;">22:21:00</div>
<div class="t" style="left:1769px;top:446px;font-size:13px;line-height:13px;color:#595959;letter-spacing:0.343px;">22:26:00</div>
</section>
<section class="response-time">
<div class="b" style="left:22px;top:475px;width:1872px;height:206px;background:#fff;border-radius:2px;"></div>
<div class="b " style="left:22px;top:531px;width:1872px;height:1px;background:#e8e8e8;"></div>
<svg class="b" style="left:0;top:535px" width="1909" height="145" viewBox="0 535 1909 145">
<line x1="80.3" x2="1883.5" y1="641.07" y2="641.07" stroke="#e2e2e2" stroke-width="1" stroke-dasharray="3,3"/>
<line x1="80.3" x2="1883.5" y1="617.64" y2="617.64" stroke="#e2e2e2" stroke-width="1" stroke-dasharray="3,3"/>
<line x1="80.3" x2="1883.5" y1="594.21" y2="594.21" stroke="#e2e2e2" stroke-width="1" stroke-dasharray="3,3"/>
<line x1="80.3" x2="1883.5" y1="570.78" y2="570.78" stroke="#e2e2e2" stroke-width="1" stroke-dasharray="3,3"/>
<line x1="80.3" x2="1883.5" y1="547.35" y2="547.35" stroke="#e2e2e2" stroke-width="1" stroke-dasharray="3,3"/>
<polyline points="80.30,664.50 200.51,664.50 320.73,577.81 440.94,628.77 561.15,628.77 681.37,628.77 801.58,628.77 921.79,628.18 1042.01,628.18 1162.22,628.42 1282.43,628.77 1402.65,558.48 1522.86,605.92 1643.07,611.08 1763.29,613.42 1883.50,616.47" fill="none" stroke="#1890ff" stroke-width="2" stroke-linejoin="round"/>
<polyline points="80.30,664.50 200.51,664.50 320.73,628.53 440.94,639.31 561.15,629.24 681.37,639.31 801.58,638.73 921.79,629.36 1042.01,629.00 1162.22,629.36 1282.43,639.08 1402.65,606.04 1522.86,617.17 1643.07,618.11 1763.29,619.16 1883.50,627.01" fill="none" stroke="#2fc25b" stroke-width="2" stroke-linejoin="round"/>
<polyline points="80.30,664.50 200.51,664.50 320.73,640.13 440.94,640.48 561.15,640.72 681.37,640.72 801.58,640.72 921.79,640.72 1042.01,640.72 1162.22,640.72 1282.43,640.37 1402.65,619.16 1522.86,620.45 1643.07,619.51 1763.29,624.79 1883.50,627.13" fill="none" stroke="#facc14" stroke-width="2" stroke-linejoin="round"/>
<polyline points="80.30,664.50 200.51,664.50 320.73,651.50 440.94,651.96 561.15,652.08 681.37,652.08 801.58,652.08 921.79,652.08 1042.01,651.61 1162.22,650.56 1282.43,651.14 1402.65,638.61 1522.86,630.88 1643.07,630.53 1763.29,632.87 1883.50,639.55" fill="none" stroke="#223273" stroke-width="2" stroke-linejoin="round"/>
<polyline points="80.30,664.50 200.51,664.50 320.73,652.43 440.94,652.32 561.15,661.92 681.37,652.20 801.58,652.32 921.79,652.32 1042.01,663.91 1162.22,652.32 1282.43,652.32 1402.65,652.67 1522.86,652.67 1643.07,652.67 1763.29,652.67 1883.50,652.67" fill="none" stroke="#8543e0" stroke-width="2" stroke-linejoin="round"/>
<polygon points="80.30,664.50 80.30,664.50 200.51,664.50 320.73,577.81 440.94,628.77 561.15,628.77 681.37,628.77 801.58,628.77 921.79,628.18 1042.01,628.18 1162.22,628.42 1282.43,628.77 1402.65,558.48 1522.86,605.92 1643.07,611.08 1763.29,613.42 1883.50,616.47 1883.50,664.50" fill="#1890ff" fill-opacity="0.35"/>
<polygon points="80.30,664.50 80.30,664.50 200.51,664.50 320.73,628.53 440.94,639.31 561.15,629.24 681.37,639.31 801.58,638.73 921.79,629.36 1042.01,629.00 1162.22,629.36 1282.43,639.08 1402.65,606.04 1522.86,617.17 1643.07,618.11 1763.29,619.16 1883.50,627.01 1883.50,664.50" fill="#2fc25b" fill-opacity="0.35"/>
<polygon points="80.30,664.50 80.30,664.50 200.51,664.50 320.73,640.13 440.94,640.48 561.15,640.72 681.37,640.72 801.58,640.72 921.79,640.72 1042.01,640.72 1162.22,640.72 1282.43,640.37 1402.65,619.16 1522.86,620.45 1643.07,619.51 1763.29,624.79 1883.50,627.13 1883.50,664.50" fill="#facc14" fill-opacity="0.35"/>
<polygon points="80.30,664.50 80.30,664.50 200.51,664.50 320.73,651.50 440.94,651.96 561.15,652.08 681.37,652.08 801.58,652.08 921.79,652.08 1042.01,651.61 1162.22,650.56 1282.43,651.14 1402.65,638.61 1522.86,630.88 1643.07,630.53 1763.29,632.87 1883.50,639.55 1883.50,664.50" fill="#223273" fill-opacity="0.35"/>
<polygon points="80.30,664.50 80.30,664.50 200.51,664.50 320.73,652.43 440.94,652.32 561.15,661.92 681.37,652.20 801.58,652.32 921.79,652.32 1042.01,663.91 1162.22,652.32 1282.43,652.32 1402.65,652.67 1522.86,652.67 1643.07,652.67 1763.29,652.67 1883.50,652.67 1883.50,664.50" fill="#8543e0" fill-opacity="0.35"/>
</svg>
<div class="t" style="left:53px;top:495px;font-size:17px;line-height:17px;color:#262626;-webkit-text-stroke:0.2px #262626;">Response Time</div>
<div class="t" style="left:61px;top:658px;font-size:13px;line-height:13px;color:#595959;">0</div>
<div class="t" style="left:39px;top:635px;font-size:13px;line-height:13px;color:#595959;">2000</div>
<div class="t" style="left:39px;top:611px;font-size:13px;line-height:13px;color:#595959;">4000</div>
<div class="t" style="left:39px;top:588px;font-size:13px;line-height:13px;color:#595959;">6000</div>
<div class="t" style="left:39px;top:564px;font-size:13px;line-height:13px;color:#595959;">8000</div>
<div class="t" style="left:31px;top:541px;font-size:13px;line-height:13px;color:#595959;letter-spacing:0.400px;">10000</div>
</section>
<section class="panel">
<div class="b" style="left:22px;top:689px;width:1245px;height:249px;background:#fff;border-radius:2px;"></div>
<div class="b " style="left:22px;top:745px;width:1245px;height:1px;background:#e8e8e8;"></div>
<div class="b " style="left:32px;top:758px;width:1225px;height:25px;background:#f2f2f2;"></div>
<div class="b " style="left:32px;top:758px;width:1225px;height:25px;background:#7dc5f9;"></div>
<div class="b " style="left:32px;top:795px;width:1225px;height:1px;background:#e8e8e8;"></div>
<div class="b " style="left:32px;top:804px;width:1225px;height:25px;background:#f2f2f2;"></div>
<div class="b " style="left:32px;top:804px;width:904px;height:25px;background:#7dc5f9;"></div>
<div class="b " style="left:32px;top:841px;width:1225px;height:1px;background:#e8e8e8;"></div>
<div class="b " style="left:32px;top:850px;width:1225px;height:25px;background:#f2f2f2;"></div>
<div class="b " style="left:32px;top:850px;width:298px;height:25px;background:#7dc5f9;"></div>
<div class="b " style="left:32px;top:887px;width:1225px;height:1px;background:#e8e8e8;"></div>
<div class="b " style="left:32px;top:896px;width:1225px;height:25px;background:#f2f2f2;"></div>
<div class="t" style="left:54px;top:709px;font-size:17px;line-height:17px;color:#262626;-webkit-text-stroke:0.2px #262626;">Slow Endpoint</div>
<div class="t" style="left:33px;top:761px;font-size:15px;line-height:15px;color:#0f1628;letter-spacing:0.213px;-webkit-text-stroke:0.4px #0f1628;">/projectA/{name}</div>
<div class="t" style="left:1196px;top:761px;font-size:15px;line-height:15px;color:rgba(0,0,0,.7);letter-spacing:0.667px;">2115 ms</div>
<div class="t" style="left:33px;top:807px;font-size:15px;line-height:15px;color:#0f1628;letter-spacing:0.225px;-webkit-text-stroke:0.4px #0f1628;">/projectC/{value}</div>
<div class="t" style="left:1196px;top:807px;font-size:15px;line-height:15px;color:rgba(0,0,0,.7);letter-spacing:0.433px;">1560 ms</div>
<div class="t" style="left:33px;top:853px;font-size:15px;line-height:15px;color:#0f1628;letter-spacing:0.250px;-webkit-text-stroke:0.4px #0f1628;">/projectB/{value}</div>
<div class="t" style="left:1206px;top:853px;font-size:15px;line-height:15px;color:rgba(0,0,0,.7);letter-spacing:0.280px;">514 ms</div>
<div class="t" style="left:32px;top:899px;font-size:15px;line-height:15px;color:#0f1628;letter-spacing:0.320px;-webkit-text-stroke:0.4px #0f1628;">Kafka/test-trace-topic/Consumer</div>
<div class="t" style="left:1225px;top:899px;font-size:15px;line-height:15px;color:rgba(0,0,0,.7);letter-spacing:-0.367px;">0 ms</div>
</section>
<section class="panel">
<div class="b" style="left:1275px;top:689px;width:619px;height:249px;background:#fff;border-radius:2px;"></div>
<div class="b " style="left:1275px;top:745px;width:619px;height:1px;background:#e8e8e8;"></div>
<div class="b " style="left:1285px;top:758px;width:599px;height:25px;background:#f2f2f2;"></div>
<div class="b " style="left:1285px;top:758px;width:599px;height:25px;background:#c6aee9;"></div>
<div class="b " style="left:1285px;top:795px;width:599px;height:1px;background:#e8e8e8;"></div>
<div class="b " style="left:1285px;top:804px;width:599px;height:25px;background:#f2f2f2;"></div>
<div class="b " style="left:1285px;top:804px;width:594px;height:25px;background:#c6aee9;"></div>
<div class="b " style="left:1285px;top:841px;width:599px;height:1px;background:#e8e8e8;"></div>
<div class="b " style="left:1285px;top:850px;width:599px;height:25px;background:#f2f2f2;"></div>
<div class="b " style="left:1285px;top:850px;width:594px;height:25px;background:#c6aee9;"></div>
<div class="b " style="left:1285px;top:887px;width:599px;height:1px;background:#e8e8e8;"></div>
<div class="b " style="left:1285px;top:896px;width:599px;height:25px;background:#f2f2f2;"></div>
<div class="b " style="left:1285px;top:896px;width:594px;height:25px;background:#c6aee9;"></div>
<div class="t" style="left:1299px;top:709px;font-size:17px;line-height:17px;color:#262626;letter-spacing:0.283px;-webkit-text-stroke:0.2px #262626;">Service Throughput</div>
<div class="t" style="left:1285px;top:761px;font-size:15px;line-height:15px;color:#0f1628;letter-spacing:0.343px;-webkit-text-stroke:0.4px #0f1628;">projectC</div>
<div class="t" style="left:1824px;top:761px;font-size:15px;line-height:15px;color:rgba(0,0,0,.7);letter-spacing:0.600px;">117 cpm</div>
<div class="t" style="left:1285px;top:807px;font-size:15px;line-height:15px;color:#0f1628;letter-spacing:0.371px;-webkit-text-stroke:0.4px #0f1628;">projectB</div>
<div class="t" style="left:1824px;top:807px;font-size:15px;line-height:15px;color:rgba(0,0,0,.7);letter-spacing:0.600px;">116 cpm</div>
<div class="t" style="left:1285px;top:853px;font-size:15px;line-height:15px;color:#0f1628;letter-spacing:0.286px;-webkit-text-stroke:0.4px #0f1628;">projectA</div>
<div class="t" style="left:1824px;top:853px;font-size:15px;line-height:15px;color:rgba(0,0,0,.7);letter-spacing:0.600px;">116 cpm</div>
<div class="t" style="left:1285px;top:899px;font-size:15px;line-height:15px;color:#0f1628;letter-spacing:0.229px;-webkit-text-stroke:0.4px #0f1628;">projectD</div>
<div class="t" style="left:1824px;top:899px;font-size:15px;line-height:15px;color:rgba(0,0,0,.7);letter-spacing:0.600px;">116 cpm</div>
</section>
</main>
<aside class="drawer-handle">
<div class="b " style="left:0px;top:73px;width:38px;height:40px;background:#fff;border-radius:0 4px 4px 0;box-shadow:0 0 6px rgba(0,0,0,.15);"></div>
<div class="b " style="left:11px;top:87.2px;width:14px;height:1.5999999999999943px;background:#1a1a1a;"></div>
<div class="b " style="left:11px;top:92.2px;width:14px;height:1.5999999999999943px;background:#1a1a1a;"></div>
<div class="b " style="left:11px;top:97.2px;width:14px;height:1.5999999999999943px;background:#1a1a1a;"></div>
</aside>
<div class="b" style="left:-2px;top:950px;width:639px;height:10px;background:#fff;border:1px solid #a6a6a6;border-radius:0 4px 0 0;box-sizing:border-box;box-shadow:0 0 12px rgba(0,0,0,.16)"></div>
</body>
</html>
